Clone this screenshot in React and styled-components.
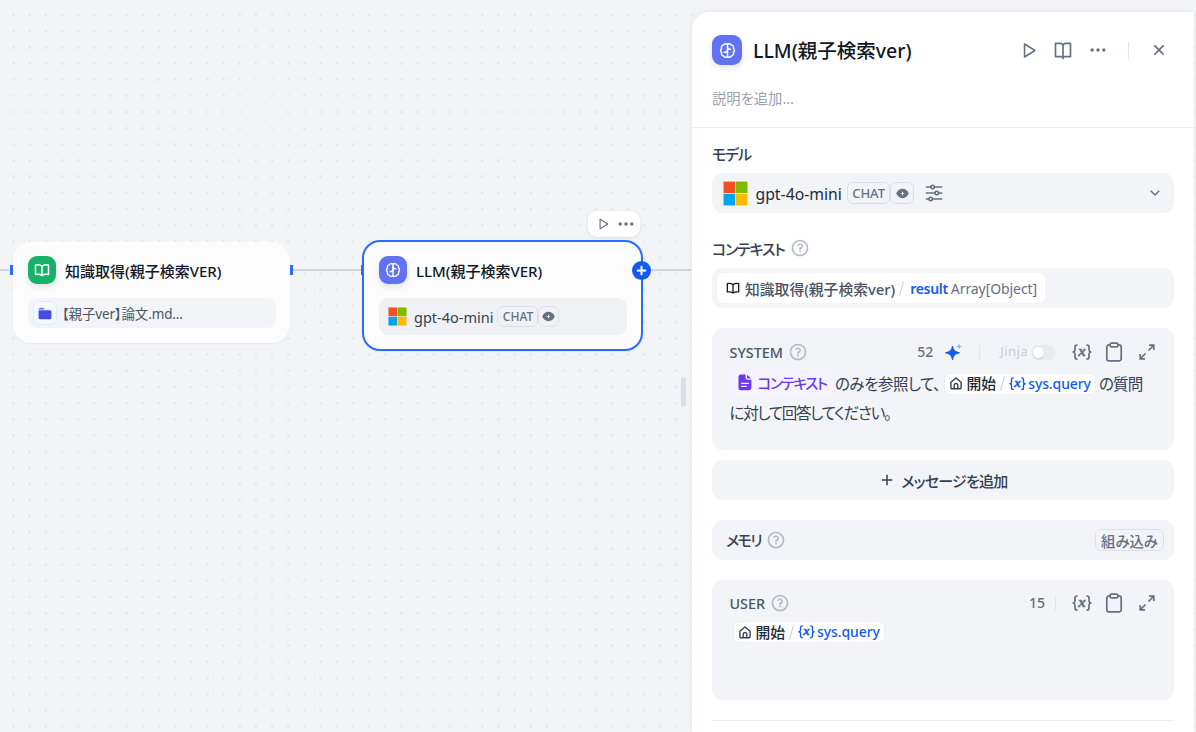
import styled, { createGlobalStyle } from 'styled-components'
import {
    RiPlayLargeLine, RiBookOpenLine, RiMoreFill, RiCloseLine, RiArrowDownSLine,
    RiQuestionLine, RiAddLine,
} from 'react-icons/ri'

const latin = '"Noto Sans", "Open Sans", "Noto Sans CJK JP", sans-serif'

function LlmIcon ({ size }) {
    return (
        <svg width={size} height={size} viewBox="0 0 16 16" fill="none" stroke="#fff" strokeWidth="1.35" strokeLinecap="round" strokeLinejoin="round">
            <path d="M8 1.6v12.8" />
            <path d="M8 2.4C7 1.2 5 1.3 4.4 2.9 2.7 3.1 1.9 4.6 2.5 6 1.2 7.2 1.2 8.8 2.5 10c-.6 1.5.3 3 1.9 3.2.7 1.5 2.6 1.6 3.6.4" />
            <path d="M8 2.4c1-1.2 3-1.1 3.6.5 1.7.2 2.5 1.7 1.9 3.1 1.3 1.2 1.3 2.8 0 4 .6 1.5-.3 3-1.9 3.2-.7 1.5-2.6 1.6-3.6.4" />
            <path d="M5 9.700C6.700 9.700 8 8.700 8 7.200M10.800 6.900C9.300 6.900 8 6 8 4.600" />
        </svg>
    )
}

function BookIcon ({ size, color }) {
    return (
        <svg width={size} height={size} viewBox="0 0 16 16" fill="none" stroke={color} strokeWidth="1.5" strokeLinejoin="round">
            <path d="M8 4.200C6.600 2.800 4 2.500 1.500 2.900v9.600C4 12.200 6.600 12.500 8 13.600c1.400-1.100 4-1.400 6.500-1.100V2.900C12 2.500 9.400 2.800 8 4.200zM8 4.200v9.200" />
        </svg>
    )
}

function FolderIcon () {
    return (
        <svg width="14" height="13" viewBox="0 0 14 13" fill="#444ce7">
            <path d="M.6 2.200A1.500 1.500 0 0 1 2.100.7h2.700c.6 0 1 .3 1.300.8l.5.9H.6z" opacity=".75" />
            <path d="M.6 3.200h11.300a1.500 1.500 0 0 1 1.500 1.500v6a1.600 1.600 0 0 1-1.600 1.600H2.200a1.600 1.600 0 0 1-1.600-1.600z" />
        </svg>
    )
}

function DocIcon () {
    return (
        <svg width="14" height="17" viewBox="0 0 14 17">
            <path d="M2.800.6h4.700v3.200a2 2 0 0 0 2 2h3.900v8a2.400 2.400 0 0 1-2.400 2.400H2.800A2.300 2.300 0 0 1 .5 13.900v-11A2.300 2.300 0 0 1 2.800.6z" fill="#6938ef" />
            <path d="M9 .8l4 3.600H9.700a.7.7 0 0 1-.7-.7z" fill="#6938ef" />
            <path d="M3.600 9.300h6.800M3.600 12.300h4.600" stroke="#f4f3ff" strokeWidth="1.300" strokeLinecap="round" />
        </svg>
    )
}

function Microsoft ({ size }) {
    return (
        <svg width={size} height={size} viewBox="0 0 25 25">
            <rect width="25" height="25" fill="#eceef0" />
            <rect x=".6" y=".6" width="11.500" height="11.500" fill="#f25022" />
            <rect x="12.900" y=".6" width="11.500" height="11.500" fill="#7fba00" />
            <rect x=".6" y="12.900" width="11.500" height="11.500" fill="#00a4ef" />
            <rect x="12.900" y="12.900" width="11.500" height="11.500" fill="#ffb900" />
        </svg>
    )
}

function EyeIcon () {
    return (
        <svg width="13" height="11" viewBox="0 0 13 11">
            <path d="M6.500.8C3.500.8 1.200 2.900.3 5.500c.9 2.600 3.200 4.700 6.200 4.700s5.300-2.100 6.200-4.700C11.800 2.900 9.500.8 6.500.8z" fill="#676f83" />
            <path d="M6.500 3.300l.6 1.600 1.600.6-1.600.6-.6 1.600-.6-1.600-1.600-.6 1.600-.6z" fill="#fff" />
        </svg>
    )
}

function SlidersIcon () {
    return (
        <svg width="18" height="18" viewBox="0 0 18 18" fill="none" stroke="#676f83" strokeWidth="1.600" strokeLinecap="round">
            <path d="M1.400 3h4.300M9.700 3h7M1.400 9h8.300M13.700 9h3M1.400 15h2.300M7.700 15h9" />
            <circle cx="7.700" cy="3" r="1.700" />
            <circle cx="11.700" cy="9" r="1.700" />
            <circle cx="5.700" cy="15" r="1.700" />
        </svg>
    )
}

function VariableIcon ({ width, color }) {
    return (
        <svg width={width} height={width * 16 / 20} viewBox="0 0 20 16" fill="none" stroke={color} strokeWidth="1.700" strokeLinecap="round" strokeLinejoin="round">
            <path d="M5 1C3.400 1 3 1.800 3 3v2.800C3 7 2.300 7.700 1.200 8 2.300 8.300 3 9 3 10.200V13c0 1.200.4 2 2 2" />
            <path d="M15 1c1.600 0 2 .8 2 2v2.800c0 1.200.7 1.900 1.800 2.200-1.100.3-1.800 1-1.800 2.200V13c0 1.200-.4 2-2 2" />
            <text x="10" y="12" textAnchor="middle" fill={color} stroke={color} strokeWidth=".5" fontFamily="Liberation Serif, serif" fontStyle="italic" fontWeight="700" fontSize="15">x</text>
        </svg>
    )
}

function ClipboardIcon () {
    return (
        <svg width="18" height="20" viewBox="0 0 18 20" fill="none" stroke="#676f83" strokeWidth="1.700" strokeLinejoin="round">
            <path d="M5 2.900H4A2.200 2.200 0 0 0 1.800 5.100v11.600A2.200 2.200 0 0 0 4 18.900h10a2.200 2.200 0 0 0 2.200-2.200V5.100A2.200 2.200 0 0 0 14 2.900h-1" />
            <rect x="5.200" y="1.200" width="7.600" height="3.600" rx="1.100" />
        </svg>
    )
}

function ExpandIcon () {
    return (
        <svg width="16" height="16" viewBox="0 0 16 16" fill="none" stroke="#676f83" strokeWidth="1.700">
            <path d="M10 1.200h4.800V6M14.500 1.500L9.500 6.500M6 14.800H1.200V10M1.500 14.500l5-5" />
        </svg>
    )
}

function SparkleIcon () {
    return (
        <svg width="17" height="17" viewBox="0 0 17 17">
            <path d="M7.500 2c.8 4 2.400 5.700 7 6.800-4.600 1.100-6.200 2.800-7 7-.8-4.200-2.500-5.900-7-7C5 7.700 6.700 6 7.500 2z" fill="#155aef" stroke="#155aef" strokeLinejoin="round" />
            <path d="M14 .3v4.400M11.800 2.500h4.400" stroke="#84abff" strokeWidth="1.200" />
        </svg>
    )
}

function HomeIcon () {
    return (
        <svg width="12" height="13" viewBox="0 0 12 13" fill="none" stroke="#354052" strokeWidth="1.400" strokeLinejoin="round">
            <path d="M.9 5.300L6 1l5.100 4.300v5.500a1 1 0 0 1-1 1H1.900a1 1 0 0 1-1-1zM4.200 11.800V8.300a1.800 1.800 0 0 1 3.600 0v3.500" />
        </svg>
    )
}

function ModelTags ({ large }) {
    return (
        <Tags $large={large}>
            <Tag $large={large}>CHAT</Tag>
            <Tag $large={large} $icon><EyeIcon /></Tag>
        </Tags>
    )
}

function QueryChip () {
    return (
        <Chip>
            <HomeIcon />
            <ChipNode>開始</ChipNode>
            <Slash />
            <VariableIcon width={17} color="#155aef" />
            <ChipVar>sys.query</ChipVar>
        </Chip>
    )
}

function EditorTools () {
    return (
        <Tools>
            <VariableIcon width={20} color="#676f83" />
            <ClipboardIcon />
            <ExpandIcon />
        </Tools>
    )
}

function Canvas () {
    return (
        <CanvasArea>
            <Edge $left={0} $width={10} />
            <Edge $left={293} $width={69} />
            <Edge $left={650} $width={41} />
            <Port $left={10} />
            <Port $left={290} />

            <Node $left={13} $top={242} $width={277} $height={101}>
                <NodeHead>
                    <BlockIcon $size={28} $color="#17b26a"><BookIcon size={16} color="#fff" /></BlockIcon>
                    <NodeTitle>知識取得(親子検索VER)</NodeTitle>
                </NodeHead>
                <NodeRow $height={30}>
                    <FolderBox><FolderIcon /></FolderBox>
                    <FileName>【親子ver】論文.md...</FileName>
                </NodeRow>
            </Node>

            <Node $left={362} $top={240} $width={281} $height={111} $selected>
                <NodeHead>
                    <BlockIcon $size={28} $color="#6172f3"><LlmIcon size={16} /></BlockIcon>
                    <NodeTitle>LLM(親子検索VER)</NodeTitle>
                </NodeHead>
                <NodeRow $height={37} $model>
                    <Microsoft size={19} />
                    <ModelName $small>gpt-4o-mini</ModelName>
                    <ModelTags />
                </NodeRow>
            </Node>
            <Port $left={361} />
            <AddHandle><RiAddLine size={15} strokeWidth={1.2} /></AddHandle>
            <NodeToolbar>
                <RiPlayLargeLine size={14} />
                <RiMoreFill size={20} />
            </NodeToolbar>
        </CanvasArea>
    )
}

function App () {
    return (
        <Page>
            <GlobalStyle />
            <Dots>
                <defs>
                    <pattern id="dots" x="5.300" y="6.900" width="16.170" height="16.170" patternUnits="userSpaceOnUse">
                        <circle cx="8.080" cy="8.080" r="1.200" fill="#e0e2e8" />
                    </pattern>
                </defs>
                <rect width="100%" height="100%" fill="url(#dots)" />
            </Dots>
            <Canvas />
            <Splitter />
            <Panel>
                <PanelHead>
                    <TitleRow>
                        <BlockIcon $size={30} $color="#6172f3"><LlmIcon size={17} /></BlockIcon>
                        <Title>LLM(親子検索ver)</Title>
                        <Actions>
                            <RiPlayLargeLine size={19} />
                            <RiBookOpenLine size={20} />
                            <RiMoreFill size={20} />
                            <Divider $height={17} />
                            <RiCloseLine size={20} />
                        </Actions>
                    </TitleRow>
                    <Description>説明を追加...</Description>
                </PanelHead>

                <PanelBody>
                    <Label>モデル</Label>
                    <ModelSelect>
                        <Microsoft size={25} />
                        <ModelName>gpt-4o-mini</ModelName>
                        <ModelTags large />
                        <SlidersIcon />
                        <Spacer />
                        <RiArrowDownSLine size={18} />
                    </ModelSelect>

                    <Label $second><span>コンテキスト</span><RiQuestionLine size={20} /></Label>
                    <ContextField>
                        <ContextChip>
                            <BookIcon size={14} color="#101828" />
                            <ChipNode $muted>知識取得(親子検索ver)</ChipNode>
                            <Slash />
                            <ChipVar $strong>result</ChipVar>
                            <ChipType>Array[Object]</ChipType>
                        </ContextChip>
                    </ContextField>

                    <Editor $height={122}>
                        <EditorHead>
                            <EditorName>SYSTEM</EditorName>
                            <RiQuestionLine size={20} />
                            <Spacer />
                            <Count>52</Count>
                            <SparkleIcon />
                            <HeadDivider />
                            <Jinja>Jinja</Jinja>
                            <Toggle />
                            <EditorTools />
                        </EditorHead>
                        <Prompt>
                            <PromptLine>
                                <ContextTag><DocIcon /><span>コンテキスト</span></ContextTag>
                                <PromptText $first>のみを参照して、</PromptText>
                                <QueryChip />
                                <PromptText>の質問</PromptText>
                            </PromptLine>
                            <PromptLine>
                                <PromptText $tight>に対して回答してください。</PromptText>
                            </PromptLine>
                        </Prompt>
                    </Editor>

                    <AddMessage><RiAddLine size={18} /><span>メッセージを追加</span></AddMessage>

                    <Memory>
                        <MemoryName>メモリ</MemoryName>
                        <RiQuestionLine size={20} />
                        <Spacer />
                        <BuiltIn>組み込み</BuiltIn>
                    </Memory>

                    <Editor $height={120}>
                        <EditorHead $user>
                            <EditorName>USER</EditorName>
                            <RiQuestionLine size={20} />
                            <Spacer />
                            <Count $user>15</Count>
                            <HeadDivider $user />
                            <EditorTools />
                        </EditorHead>
                        <Prompt $user>
                            <QueryChip />
                        </Prompt>
                    </Editor>
                    <Rule />
                </PanelBody>
            </Panel>
        </Page>
    )
}

const GlobalStyle = createGlobalStyle`
    * {
        box-sizing: border-box;
    }

    body {
        margin: 0;
        overflow: hidden;
        background-color: #f2f4f7;
        font-family: ${latin};
        font-feature-settings: "palt";
    }

    svg {
        flex-shrink: 0;
        display: block;
    }
`

const Page = styled.div`
    position: relative;
    display: flex;
    width: 1196px;
    height: 732px;
    overflow: hidden;
    background-color: #f2f4f8;
    color: #354052;
    white-space: nowrap;
`

const Dots = styled.svg`
    position: absolute;
    inset: 0;
    width: 100%;
    height: 100%;
`

const CanvasArea = styled.div`
    position: relative;
    flex: 1;
`

const Edge = styled.div`
    position: absolute;
    top: 269px;
    left: ${({ $left }) => $left}px;
    width: ${({ $width }) => $width}px;
    height: 2px;
    background-color: #d0d5dc;
`

const Port = styled.div`
    position: absolute;
    top: 265px;
    left: ${({ $left }) => $left}px;
    width: 3px;
    height: 10px;
    background-color: #296dff;
`

const Node = styled.div`
    position: absolute;
    left: ${({ $left }) => $left}px;
    top: ${({ $top }) => $top}px;
    width: ${({ $width }) => $width}px;
    height: ${({ $height }) => $height}px;
    padding: 14px 14px 14px 15px;
    border: ${({ $selected }) => $selected ? '2px solid #296dff' : 'none'};
    border-radius: 18px;
    background-color: #fcfcfd;
    box-shadow: 0 1px 2px rgba(16, 24, 40, 0.05);
`

const NodeHead = styled.div`
    display: flex;
    align-items: center;
    gap: 9px;
    height: 28px;
`

const BlockIcon = styled.div`
    display: flex;
    align-items: center;
    justify-content: center;
    flex-shrink: 0;
    width: ${({ $size }) => $size}px;
    height: ${({ $size }) => $size}px;
    border-radius: 9px;
    background-color: ${({ $color }) => $color};
    box-shadow: 0 3px 6px rgba(16, 24, 40, 0.1);
`

const NodeTitle = styled.div`
    padding-top: 1px;
    font-size: 15px;
    font-weight: 500;
    line-height: 20px;
    color: #101828;
`

const NodeRow = styled.div`
    display: flex;
    align-items: center;
    margin-top: 14px;
    padding-left: ${({ $model }) => $model ? 9 : 5}px;
    height: ${({ $height }) => $height}px;
    border-radius: 9px;
    background-color: ${({ $model }) => $model ? '#f0f1f5' : '#f2f4f8'};
`

const FolderBox = styled.div`
    display: flex;
    align-items: center;
    justify-content: center;
    width: 24px;
    height: 24px;
    border: 1px solid #e0eaff;
    border-radius: 6px;
    background-color: #f5f8ff;
`

const FileName = styled.div`
    margin-left: 5px;
    padding-bottom: 1px;
    font-size: 13.500px;
    letter-spacing: -0.150px;
    color: #495464;
`

const ModelName = styled.div`
    margin-left: ${({ $small }) => $small ? 7 : 7.5}px;
    margin-right: ${({ $small }) => $small ? 4 : 5}px;
    padding-top: ${({ $small }) => $small ? 0 : 2}px;
    font-size: ${({ $small }) => $small ? 14.5 : 15.75}px;
    color: ${({ $small }) => $small ? '#354052' : '#1d2939'};
`

const Tags = styled.div`
    display: flex;
    margin-right: ${({ $large }) => $large ? 11 : 0}px;
`

const Tag = styled.div`
    display: flex;
    align-items: center;
    justify-content: center;
    width: ${({ $icon, $large }) => ($icon ? 21 : 41) + ($large ? 2.5 : 0)}px;
    height: ${({ $large }) => $large ? 22 : 21}px;
    border: 1px solid #dcdfe5;
    border-radius: 6px;
    font-size: ${({ $large }) => $large ? 13 : 12}px;
    font-weight: 500;
    color: #676f83;
`

const AddHandle = styled.div`
    position: absolute;
    left: 632px;
    top: 261px;
    display: flex;
    align-items: center;
    justify-content: center;
    width: 19px;
    height: 19px;
    border-radius: 50%;
    background-color: #155aef;
    color: #fff;
`

const NodeToolbar = styled.div`
    position: absolute;
    left: 588px;
    top: 211px;
    display: flex;
    align-items: center;
    justify-content: space-between;
    width: 52px;
    height: 26px;
    padding: 0 4px 0 8px;
    border-radius: 9px;
    background-color: #fff;
    box-shadow: 0 1px 3px rgba(16, 24, 40, 0.1);
    color: #676f83;
`

const Splitter = styled.div`
    position: relative;
    align-self: flex-start;
    width: 5px;
    height: 30px;
    margin: 377px 6px 0 0;
    border-radius: 3px;
    background-color: #dcdfe5;
`

const Panel = styled.div`
    position: relative;
    width: 502px;
    margin: 12px 2px 0 0;
    border-top-left-radius: 18px;
    background-color: #fff;
    box-shadow: 0 0 6px rgba(16, 24, 40, 0.07);
`

const PanelHead = styled.div`
    height: 116px;
    padding: 23px 20px 0;
    border-bottom: 1px solid #eff0f3;
`

const TitleRow = styled.div`
    display: flex;
    align-items: center;
    height: 30px;
`

const Title = styled.div`
    flex: 1;
    margin-left: 11px;
    padding-bottom: 1px;
    font-size: 19.500px;
    font-weight: 500;
    color: #101828;
`

const Actions = styled.div`
    display: flex;
    align-items: center;
    gap: 15px;
    margin-right: 5px;
    color: #676f83;
`

const Divider = styled.div`
    width: 1px;
    height: ${({ $height }) => $height}px;
    margin: 0 5px;
    background-color: #e3e5ea;
`

const Description = styled.div`
    margin-top: 24px;
    font-size: 14.300px;
    line-height: 20px;
    color: #98a2b2;
`

const PanelBody = styled.div`
    display: flex;
    flex-direction: column;
    padding: 16px 20px 0;
`

const Label = styled.div`
    display: flex;
    align-items: center;
    gap: 5.500px;
    height: 20px;
    margin-top: ${({ $second }) => $second ? 25 : -1}px;
    margin-bottom: ${({ $second }) => $second ? 0 : 1}px;
    font-size: 15px;
    font-weight: 500;
    letter-spacing: -1.200px;
    color: #354052;

    svg {
        color: #b4b9c3;
    }
`

const Box = styled.div`
    display: flex;
    align-items: center;
    height: 40px;
    border-radius: 11px;
    background-color: #f2f4f8;
`

const ModelSelect = styled(Box)`
    margin-top: 9px;
    padding: 0 10px 0 11px;
    color: #676f83;
`

const Spacer = styled.div`
    flex: 1;
`

const ContextField = styled(Box)`
    margin-top: 10px;
    padding-left: 5px;
`

const ContextChip = styled.div`
    display: flex;
    align-items: center;
    height: 30px;
    padding: 0 8px 0 9px;
    border-radius: 7px;
    background-color: #fff;
`

const ChipNode = styled.span`
    margin-left: 5px;
    padding-bottom: ${({ $muted }) => $muted ? 0 : 2}px;
    font-size: 14.800px;
    font-weight: 500;
    color: ${({ $muted }) => $muted ? '#495464' : '#1d2939'};
`

const Slash = styled.div`
    width: 1px;
    height: 15px;
    margin: 0 6px;
    background-color: #c8ccd4;
    transform: rotate(15deg);
`

const ChipVar = styled.span`
    margin-left: 2px;
    padding-bottom: ${({ $strong }) => $strong ? 0 : 1}px;
    font-size: 14px;
    font-weight: ${({ $strong }) => $strong ? 600 : 500};
    letter-spacing: ${({ $strong }) => $strong ? -0.3 : -0.1}px;
    color: #155aef;
`

const ChipType = styled.span`
    margin-left: 3px;
    font-size: 14px;
    letter-spacing: -0.080px;
    color: #676f83;
`

const Chip = styled.div`
    display: flex;
    align-items: center;
    height: 22px;
    padding: 0 4px 0 5px;
    border: 1px solid #eceef2;
    border-radius: 6px;
    background-color: #fff;
`

const Editor = styled.div`
    height: ${({ $height }) => $height}px;
    margin-top: 20px;
    border-radius: 11px;
    background-color: #f2f4f8;
`

const EditorHead = styled.div`
    display: flex;
    align-items: center;
    height: ${({ $user }) => $user ? 46 : 48}px;
    padding: 0 19px 0 17.500px;
    color: #b4b9c3;
`

const EditorName = styled.div`
    margin-right: 5px;
    font-size: 14.400px;
    font-weight: 500;
    color: #495464;
`

const Count = styled.div`
    margin-right: ${({ $user }) => $user ? 10 : 12}px;
    padding-bottom: 1px;
    font-size: 14px;
    font-weight: 500;
    color: #676f83;
`

const HeadDivider = styled.div`
    width: 1px;
    height: 15px;
    margin-left: ${({ $user }) => $user ? 0 : 17}px;
    background-color: #e3e5ea;
`

const Tools = styled.div`
    display: flex;
    align-items: center;
    margin-left: 16px;

    svg:nth-child(2) {
        margin: 0 16px 0 13px;
    }
`

const Jinja = styled.div`
    margin-left: 20px;
    padding-bottom: 2px;
    font-size: 13.300px;
    letter-spacing: 0.300px;
    color: #c8ccd4;
`

const Toggle = styled.div`
    width: 25px;
    height: 15px;
    margin-left: 3px;
    padding: 2px;
    border-radius: 8px;
    background-color: #e9ebf0;

    &::before {
        content: "";
        display: block;
        width: 11px;
        height: 11px;
        border-radius: 50%;
        background-color: #fff;
        box-shadow: 0 1px 2px rgba(16, 24, 40, 0.15);
    }
`

const Prompt = styled.div`
    padding: ${({ $user }) => $user ? '0 20.5px' : '0 17.5px'};
    display: flex;
    flex-direction: column;
    align-items: flex-start;
    margin-top: ${({ $user }) => $user ? -5 : -7}px;
`

const PromptLine = styled.div`
    display: flex;
    align-items: center;
    height: 29px;
`

const PromptText = styled.span`
    margin-right: ${({ $first }) => $first ? 3 : 0}px;
    margin-left: ${({ $first, $tight }) => $first || $tight ? 0 : 3}px;
    font-size: 15.500px;
    letter-spacing: ${({ $tight, $first }) => $tight ? -1.25 : $first ? -0.45 : -0.8}px;
    color: #354052;
`

const ContextTag = styled.span`
    display: flex;
    align-items: center;
    gap: 6px;
    height: 29px;
    margin-right: 1px;
    padding: 0 7px 2px 8px;
    border-radius: 6px;
    background-color: #f4f3ff;
    font-size: 14.500px;
    font-weight: 500;
    letter-spacing: -1.300px;
    color: #6938ef;
`

const AddMessage = styled(Box)`
    justify-content: center;
    gap: 5px;
    margin-top: 10px;
    font-size: 15px;
    font-weight: 500;
    letter-spacing: -0.750px;
`

const Memory = styled(Box)`
    margin-top: 20px;
    padding: 0 10px 0 14px;

    svg {
        color: #b4b9c3;
    }
`

const MemoryName = styled.div`
    margin-right: 4.500px;
    padding-bottom: 1px;
    font-size: 15px;
    font-weight: 500;
    letter-spacing: -1.500px;
`

const BuiltIn = styled.div`
    display: flex;
    align-items: center;
    height: 22px;
    padding: 0 5px;
    border: 1px solid #dcdfe5;
    border-radius: 6px;
    font-size: 14.400px;
    font-weight: 500;
    color: #676f83;
`

const Rule = styled.div`
    height: 1px;
    margin-top: 20px;
    background-color: #eff0f3;
`

export default App
